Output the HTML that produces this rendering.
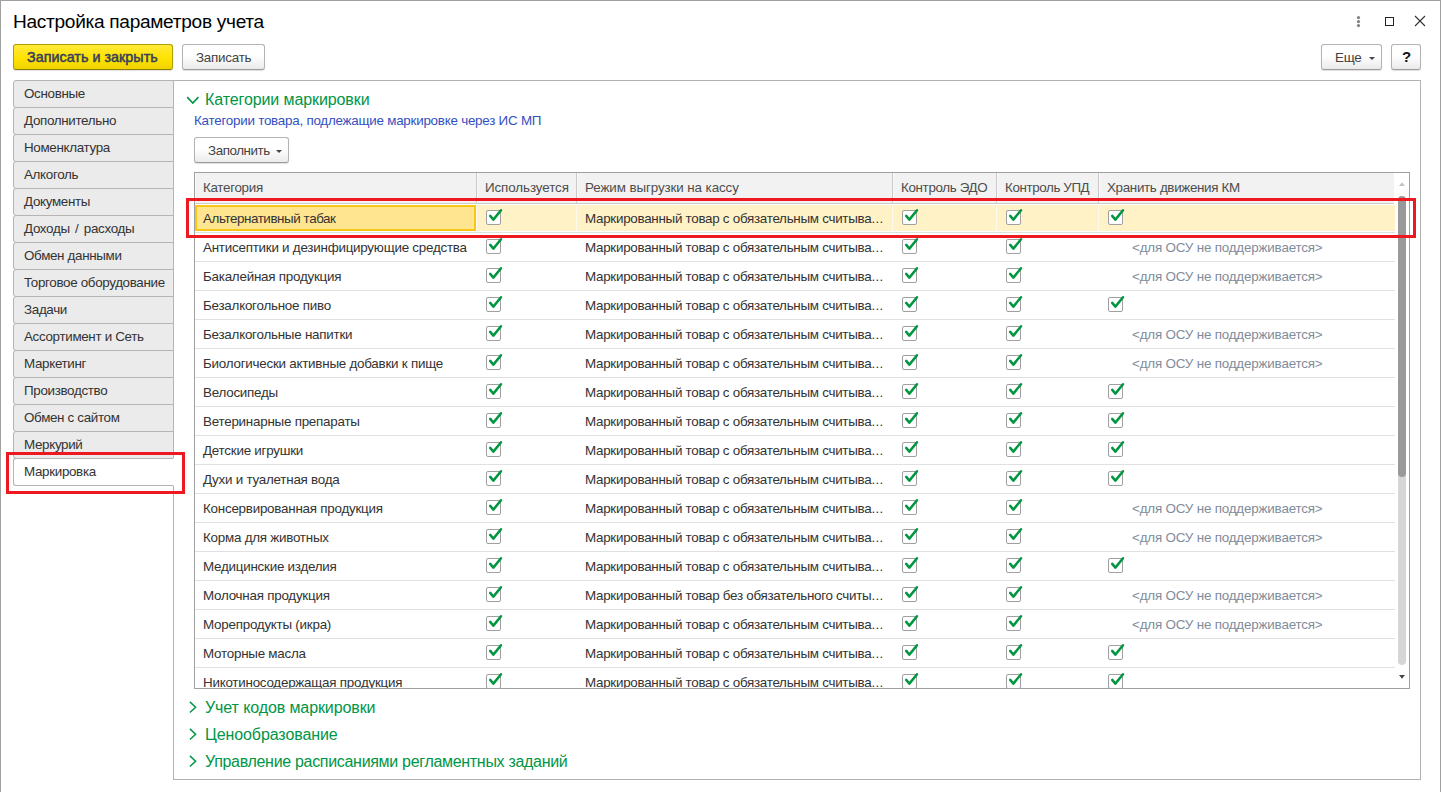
<!DOCTYPE html>
<html lang="ru">
<head>
<meta charset="utf-8">
<title>Настройка параметров учета</title>
<style>
*{box-sizing:border-box;margin:0;padding:0}
html,body{width:1441px;height:792px;overflow:hidden;background:#fff}
body{position:relative;font-family:"Liberation Sans",sans-serif;font-size:13.4px;letter-spacing:-0.24px;color:#333;line-height:16px}
.frame{position:absolute;left:0;top:0;width:1441px;height:793px;border:1px solid #a0a0a0}
.title{position:absolute;left:13px;top:10px;font-size:19.1px;letter-spacing:-0.3px;line-height:24px;color:#000;white-space:nowrap}
.btn{position:absolute;top:44px;height:26px;border:1px solid #b3b3b3;border-bottom-color:#9b9b9b;border-radius:3px;background:linear-gradient(#fff 0%,#fff 45%,#ebebeb 100%);box-shadow:0 1px 1px rgba(0,0,0,.13);color:#424242;line-height:25px;white-space:nowrap}
.btn span{position:absolute;top:0}
.btn.y{font-size:14.3px;letter-spacing:0.04px;-webkit-text-stroke:0.5px #353e5c;background:linear-gradient(#ffe93a 0%,#ffe300 55%,#f0d300 100%);border-color:#b39e00 #b39e00 #8f7e00;color:#353e5c}
.arr{position:absolute;width:0;height:0;border-left:3px solid transparent;border-right:3px solid transparent;border-top:3px solid #444}
.tab{position:absolute;left:13px;width:161px;height:28px;border:1px solid #b4b4b4;border-radius:3px 0 0 3px;background:#ebebeb;padding-left:10px;line-height:25px;letter-spacing:-0.33px;color:#333;white-space:nowrap}
.tab.sel{background:#fff;border-right-color:#fff}
.panel{position:absolute;left:173px;top:80px;width:1248px;height:700px;border:1px solid #b2b2b2}
.grp{position:absolute;left:205px;font-size:16px;letter-spacing:-0.1px;line-height:20px;color:#009646;white-space:nowrap}
.sub{position:absolute;left:194px;top:113px;color:#3350c0;white-space:nowrap}
svg{position:absolute;overflow:visible}
.tbl{position:absolute;left:194px;top:172px;width:1216px;height:517px;border:1px solid #a0a0a0;overflow:hidden}
.hdr{position:absolute;left:0;top:0;width:1199px;overflow:hidden;height:31px;background:#f2f2f2;border-bottom:1px solid #ccc}
.hc{position:absolute;top:0;height:30px;padding-left:8px;line-height:29px;letter-spacing:-0.1px;color:#4d4d4d;white-space:nowrap;border-left:1px solid #c8c8c8;box-shadow:inset 1px 0 0 #fafafa}
.row{position:absolute;left:0;width:1200px;height:29px;border-bottom:1px solid #e0e0e0}
.c{position:absolute;top:1px;height:28px;line-height:28px;white-space:nowrap;color:#333}
.cb{position:absolute;top:6px;width:15px;height:15px;border:1px solid #a0a0a0;border-radius:2px;background:#fff}
.osu{color:#7f8c9b;letter-spacing:-0.18px}
.red{position:absolute;border:3px solid #ed1820}
.sbt{position:absolute;left:1398px;width:8px;border-radius:4px}
</style>
</head>
<body>
<div class="frame"></div>
<div class="title">Настройка параметров учета</div>
<svg width="80" height="20" style="left:1350px;top:10px" viewBox="1350 10 80 20"><circle cx="1358.5" cy="17.6" r="1.55" fill="#808080"/><circle cx="1358.5" cy="21.6" r="1.55" fill="#808080"/><circle cx="1358.5" cy="25.6" r="1.55" fill="#808080"/><rect x="1385.5" y="17.5" width="8" height="8" fill="none" stroke="#222" stroke-width="1"/><path d="M1415 16 L1425 26 M1425 16 L1415 26" stroke="#333" stroke-width="1.1" fill="none"/></svg>
<div class="btn y" style="left:13px;width:160px"><span style="left:13px">Записать и закрыть</span></div>
<div class="btn" style="left:182px;width:83px"><span style="left:13px">Записать</span></div>
<div class="btn" style="left:1321px;width:61px"><span style="left:13px">Еще</span><i class="arr" style="left:47px;top:12px"></i></div>
<div class="btn" style="left:1391px;width:30px"><span style="left:10px;top:-1px;font-size:15px;font-weight:bold;color:#111">?</span></div>
<div class="panel"></div>
<div class="tab" style="top:80px">Основные</div>
<div class="tab" style="top:107px">Дополнительно</div>
<div class="tab" style="top:134px">Номенклатура</div>
<div class="tab" style="top:161px">Алкоголь</div>
<div class="tab" style="top:188px">Документы</div>
<div class="tab" style="top:215px;word-spacing:2px">Доходы / расходы</div>
<div class="tab" style="top:242px">Обмен данными</div>
<div class="tab" style="top:269px">Торговое оборудование</div>
<div class="tab" style="top:296px">Задачи</div>
<div class="tab" style="top:323px">Ассортимент и Сеть</div>
<div class="tab" style="top:350px">Маркетинг</div>
<div class="tab" style="top:377px">Производство</div>
<div class="tab" style="top:404px">Обмен с сайтом</div>
<div class="tab" style="top:431px">Меркурий</div>
<div class="tab sel" style="top:458px">Маркировка</div>
<svg width="12" height="8" style="left:187px;top:97px" viewBox="0 0 12 8"><path d="M0.2 0.1 L5.8 6.1 L11.4 0.1" fill="none" stroke="#009646" stroke-width="1.6"/></svg>
<div class="grp" style="top:90px;letter-spacing:-0.1px">Категории маркировки</div>
<div class="sub">Категории товара, подлежащие маркировке через ИС МП</div>
<div class="btn" style="left:194px;top:137px;width:95px"><span style="left:13px;letter-spacing:-0.45px">Заполнить</span><i class="arr" style="left:81px;top:12px"></i></div>
<div class="tbl">
<div class="hdr"><div class="hc" style="left:0px;width:282px;letter-spacing:-0.3px;border-left:none;padding-left:8px">Категория</div><div class="hc" style="left:281px;width:100px;letter-spacing:-0.1px">Используется</div><div class="hc" style="left:381px;width:316px;letter-spacing:-0.1px">Режим выгрузки на кассу</div><div class="hc" style="left:697px;width:104px;letter-spacing:-0.35px">Контроль ЭДО</div><div class="hc" style="left:801px;width:102px;letter-spacing:-0.4px">Контроль УПД</div><div class="hc" style="left:903px;width:296px;letter-spacing:-0.33px">Хранить движения КМ</div></div>
<div class="row" style="top:31px"><div style="position:absolute;left:0;top:1px;width:1200px;height:26px;background:#fff2c7"></div><div style="position:absolute;left:0;top:1px;width:281px;height:26px;background:#ffe58f;border:2px solid #f8c716"></div><div style="position:absolute;left:281px;top:1px;width:1px;height:26px;background:#fffaf0"></div><div style="position:absolute;left:381px;top:1px;width:1px;height:26px;background:#fffaf0"></div><div style="position:absolute;left:697px;top:1px;width:1px;height:26px;background:#fffaf0"></div><div style="position:absolute;left:801px;top:1px;width:1px;height:26px;background:#fffaf0"></div><div style="position:absolute;left:903px;top:1px;width:1px;height:26px;background:#fffaf0"></div><div class="c" style="left:8px;letter-spacing:-0.43px">Альтернативный табак</div><div class="cb" style="left:291px"><svg width="17" height="17" style="left:-1px;top:-2px" viewBox="0 0 17 17"><path d="M4.2 6.9 L7.4 10.6 L15 1.2" fill="none" stroke="#009640" stroke-width="2.5" stroke-linecap="round" stroke-linejoin="round"/></svg></div><div class="c" style="left:390px;letter-spacing:-0.28px">Маркированный товар с обязательным считыва<span style="letter-spacing:0.3px">...</span></div><div class="cb" style="left:707px"><svg width="17" height="17" style="left:-1px;top:-2px" viewBox="0 0 17 17"><path d="M4.2 6.9 L7.4 10.6 L15 1.2" fill="none" stroke="#009640" stroke-width="2.5" stroke-linecap="round" stroke-linejoin="round"/></svg></div><div class="cb" style="left:811px"><svg width="17" height="17" style="left:-1px;top:-2px" viewBox="0 0 17 17"><path d="M4.2 6.9 L7.4 10.6 L15 1.2" fill="none" stroke="#009640" stroke-width="2.5" stroke-linecap="round" stroke-linejoin="round"/></svg></div><div class="cb" style="left:913px"><svg width="17" height="17" style="left:-1px;top:-2px" viewBox="0 0 17 17"><path d="M4.2 6.9 L7.4 10.6 L15 1.2" fill="none" stroke="#009640" stroke-width="2.5" stroke-linecap="round" stroke-linejoin="round"/></svg></div></div>
<div class="row" style="top:60px"><div class="c" style="left:8px">Антисептики и дезинфицирующие средства</div><div class="cb" style="left:291px"><svg width="17" height="17" style="left:-1px;top:-2px" viewBox="0 0 17 17"><path d="M4.2 6.9 L7.4 10.6 L15 1.2" fill="none" stroke="#009640" stroke-width="2.5" stroke-linecap="round" stroke-linejoin="round"/></svg></div><div class="c" style="left:390px;letter-spacing:-0.28px">Маркированный товар с обязательным считыва<span style="letter-spacing:0.3px">...</span></div><div class="cb" style="left:707px"><svg width="17" height="17" style="left:-1px;top:-2px" viewBox="0 0 17 17"><path d="M4.2 6.9 L7.4 10.6 L15 1.2" fill="none" stroke="#009640" stroke-width="2.5" stroke-linecap="round" stroke-linejoin="round"/></svg></div><div class="cb" style="left:811px"><svg width="17" height="17" style="left:-1px;top:-2px" viewBox="0 0 17 17"><path d="M4.2 6.9 L7.4 10.6 L15 1.2" fill="none" stroke="#009640" stroke-width="2.5" stroke-linecap="round" stroke-linejoin="round"/></svg></div><div class="c osu" style="left:937px">&lt;для ОСУ не поддерживается&gt;</div></div>
<div class="row" style="top:89px"><div class="c" style="left:8px">Бакалейная продукция</div><div class="cb" style="left:291px"><svg width="17" height="17" style="left:-1px;top:-2px" viewBox="0 0 17 17"><path d="M4.2 6.9 L7.4 10.6 L15 1.2" fill="none" stroke="#009640" stroke-width="2.5" stroke-linecap="round" stroke-linejoin="round"/></svg></div><div class="c" style="left:390px;letter-spacing:-0.28px">Маркированный товар с обязательным считыва<span style="letter-spacing:0.3px">...</span></div><div class="cb" style="left:707px"><svg width="17" height="17" style="left:-1px;top:-2px" viewBox="0 0 17 17"><path d="M4.2 6.9 L7.4 10.6 L15 1.2" fill="none" stroke="#009640" stroke-width="2.5" stroke-linecap="round" stroke-linejoin="round"/></svg></div><div class="cb" style="left:811px"><svg width="17" height="17" style="left:-1px;top:-2px" viewBox="0 0 17 17"><path d="M4.2 6.9 L7.4 10.6 L15 1.2" fill="none" stroke="#009640" stroke-width="2.5" stroke-linecap="round" stroke-linejoin="round"/></svg></div><div class="c osu" style="left:937px">&lt;для ОСУ не поддерживается&gt;</div></div>
<div class="row" style="top:118px"><div class="c" style="left:8px">Безалкогольное пиво</div><div class="cb" style="left:291px"><svg width="17" height="17" style="left:-1px;top:-2px" viewBox="0 0 17 17"><path d="M4.2 6.9 L7.4 10.6 L15 1.2" fill="none" stroke="#009640" stroke-width="2.5" stroke-linecap="round" stroke-linejoin="round"/></svg></div><div class="c" style="left:390px;letter-spacing:-0.28px">Маркированный товар с обязательным считыва<span style="letter-spacing:0.3px">...</span></div><div class="cb" style="left:707px"><svg width="17" height="17" style="left:-1px;top:-2px" viewBox="0 0 17 17"><path d="M4.2 6.9 L7.4 10.6 L15 1.2" fill="none" stroke="#009640" stroke-width="2.5" stroke-linecap="round" stroke-linejoin="round"/></svg></div><div class="cb" style="left:811px"><svg width="17" height="17" style="left:-1px;top:-2px" viewBox="0 0 17 17"><path d="M4.2 6.9 L7.4 10.6 L15 1.2" fill="none" stroke="#009640" stroke-width="2.5" stroke-linecap="round" stroke-linejoin="round"/></svg></div><div class="cb" style="left:913px"><svg width="17" height="17" style="left:-1px;top:-2px" viewBox="0 0 17 17"><path d="M4.2 6.9 L7.4 10.6 L15 1.2" fill="none" stroke="#009640" stroke-width="2.5" stroke-linecap="round" stroke-linejoin="round"/></svg></div></div>
<div class="row" style="top:147px"><div class="c" style="left:8px">Безалкогольные напитки</div><div class="cb" style="left:291px"><svg width="17" height="17" style="left:-1px;top:-2px" viewBox="0 0 17 17"><path d="M4.2 6.9 L7.4 10.6 L15 1.2" fill="none" stroke="#009640" stroke-width="2.5" stroke-linecap="round" stroke-linejoin="round"/></svg></div><div class="c" style="left:390px;letter-spacing:-0.28px">Маркированный товар с обязательным считыва<span style="letter-spacing:0.3px">...</span></div><div class="cb" style="left:707px"><svg width="17" height="17" style="left:-1px;top:-2px" viewBox="0 0 17 17"><path d="M4.2 6.9 L7.4 10.6 L15 1.2" fill="none" stroke="#009640" stroke-width="2.5" stroke-linecap="round" stroke-linejoin="round"/></svg></div><div class="cb" style="left:811px"><svg width="17" height="17" style="left:-1px;top:-2px" viewBox="0 0 17 17"><path d="M4.2 6.9 L7.4 10.6 L15 1.2" fill="none" stroke="#009640" stroke-width="2.5" stroke-linecap="round" stroke-linejoin="round"/></svg></div><div class="c osu" style="left:937px">&lt;для ОСУ не поддерживается&gt;</div></div>
<div class="row" style="top:176px"><div class="c" style="left:8px">Биологически активные добавки к пище</div><div class="cb" style="left:291px"><svg width="17" height="17" style="left:-1px;top:-2px" viewBox="0 0 17 17"><path d="M4.2 6.9 L7.4 10.6 L15 1.2" fill="none" stroke="#009640" stroke-width="2.5" stroke-linecap="round" stroke-linejoin="round"/></svg></div><div class="c" style="left:390px;letter-spacing:-0.28px">Маркированный товар с обязательным считыва<span style="letter-spacing:0.3px">...</span></div><div class="cb" style="left:707px"><svg width="17" height="17" style="left:-1px;top:-2px" viewBox="0 0 17 17"><path d="M4.2 6.9 L7.4 10.6 L15 1.2" fill="none" stroke="#009640" stroke-width="2.5" stroke-linecap="round" stroke-linejoin="round"/></svg></div><div class="cb" style="left:811px"><svg width="17" height="17" style="left:-1px;top:-2px" viewBox="0 0 17 17"><path d="M4.2 6.9 L7.4 10.6 L15 1.2" fill="none" stroke="#009640" stroke-width="2.5" stroke-linecap="round" stroke-linejoin="round"/></svg></div><div class="c osu" style="left:937px">&lt;для ОСУ не поддерживается&gt;</div></div>
<div class="row" style="top:205px"><div class="c" style="left:8px">Велосипеды</div><div class="cb" style="left:291px"><svg width="17" height="17" style="left:-1px;top:-2px" viewBox="0 0 17 17"><path d="M4.2 6.9 L7.4 10.6 L15 1.2" fill="none" stroke="#009640" stroke-width="2.5" stroke-linecap="round" stroke-linejoin="round"/></svg></div><div class="c" style="left:390px;letter-spacing:-0.28px">Маркированный товар с обязательным считыва<span style="letter-spacing:0.3px">...</span></div><div class="cb" style="left:707px"><svg width="17" height="17" style="left:-1px;top:-2px" viewBox="0 0 17 17"><path d="M4.2 6.9 L7.4 10.6 L15 1.2" fill="none" stroke="#009640" stroke-width="2.5" stroke-linecap="round" stroke-linejoin="round"/></svg></div><div class="cb" style="left:811px"><svg width="17" height="17" style="left:-1px;top:-2px" viewBox="0 0 17 17"><path d="M4.2 6.9 L7.4 10.6 L15 1.2" fill="none" stroke="#009640" stroke-width="2.5" stroke-linecap="round" stroke-linejoin="round"/></svg></div><div class="cb" style="left:913px"><svg width="17" height="17" style="left:-1px;top:-2px" viewBox="0 0 17 17"><path d="M4.2 6.9 L7.4 10.6 L15 1.2" fill="none" stroke="#009640" stroke-width="2.5" stroke-linecap="round" stroke-linejoin="round"/></svg></div></div>
<div class="row" style="top:234px"><div class="c" style="left:8px">Ветеринарные препараты</div><div class="cb" style="left:291px"><svg width="17" height="17" style="left:-1px;top:-2px" viewBox="0 0 17 17"><path d="M4.2 6.9 L7.4 10.6 L15 1.2" fill="none" stroke="#009640" stroke-width="2.5" stroke-linecap="round" stroke-linejoin="round"/></svg></div><div class="c" style="left:390px;letter-spacing:-0.28px">Маркированный товар с обязательным считыва<span style="letter-spacing:0.3px">...</span></div><div class="cb" style="left:707px"><svg width="17" height="17" style="left:-1px;top:-2px" viewBox="0 0 17 17"><path d="M4.2 6.9 L7.4 10.6 L15 1.2" fill="none" stroke="#009640" stroke-width="2.5" stroke-linecap="round" stroke-linejoin="round"/></svg></div><div class="cb" style="left:811px"><svg width="17" height="17" style="left:-1px;top:-2px" viewBox="0 0 17 17"><path d="M4.2 6.9 L7.4 10.6 L15 1.2" fill="none" stroke="#009640" stroke-width="2.5" stroke-linecap="round" stroke-linejoin="round"/></svg></div><div class="cb" style="left:913px"><svg width="17" height="17" style="left:-1px;top:-2px" viewBox="0 0 17 17"><path d="M4.2 6.9 L7.4 10.6 L15 1.2" fill="none" stroke="#009640" stroke-width="2.5" stroke-linecap="round" stroke-linejoin="round"/></svg></div></div>
<div class="row" style="top:263px"><div class="c" style="left:8px">Детские игрушки</div><div class="cb" style="left:291px"><svg width="17" height="17" style="left:-1px;top:-2px" viewBox="0 0 17 17"><path d="M4.2 6.9 L7.4 10.6 L15 1.2" fill="none" stroke="#009640" stroke-width="2.5" stroke-linecap="round" stroke-linejoin="round"/></svg></div><div class="c" style="left:390px;letter-spacing:-0.28px">Маркированный товар с обязательным считыва<span style="letter-spacing:0.3px">...</span></div><div class="cb" style="left:707px"><svg width="17" height="17" style="left:-1px;top:-2px" viewBox="0 0 17 17"><path d="M4.2 6.9 L7.4 10.6 L15 1.2" fill="none" stroke="#009640" stroke-width="2.5" stroke-linecap="round" stroke-linejoin="round"/></svg></div><div class="cb" style="left:811px"><svg width="17" height="17" style="left:-1px;top:-2px" viewBox="0 0 17 17"><path d="M4.2 6.9 L7.4 10.6 L15 1.2" fill="none" stroke="#009640" stroke-width="2.5" stroke-linecap="round" stroke-linejoin="round"/></svg></div><div class="cb" style="left:913px"><svg width="17" height="17" style="left:-1px;top:-2px" viewBox="0 0 17 17"><path d="M4.2 6.9 L7.4 10.6 L15 1.2" fill="none" stroke="#009640" stroke-width="2.5" stroke-linecap="round" stroke-linejoin="round"/></svg></div></div>
<div class="row" style="top:292px"><div class="c" style="left:8px">Духи и туалетная вода</div><div class="cb" style="left:291px"><svg width="17" height="17" style="left:-1px;top:-2px" viewBox="0 0 17 17"><path d="M4.2 6.9 L7.4 10.6 L15 1.2" fill="none" stroke="#009640" stroke-width="2.5" stroke-linecap="round" stroke-linejoin="round"/></svg></div><div class="c" style="left:390px;letter-spacing:-0.28px">Маркированный товар с обязательным считыва<span style="letter-spacing:0.3px">...</span></div><div class="cb" style="left:707px"><svg width="17" height="17" style="left:-1px;top:-2px" viewBox="0 0 17 17"><path d="M4.2 6.9 L7.4 10.6 L15 1.2" fill="none" stroke="#009640" stroke-width="2.5" stroke-linecap="round" stroke-linejoin="round"/></svg></div><div class="cb" style="left:811px"><svg width="17" height="17" style="left:-1px;top:-2px" viewBox="0 0 17 17"><path d="M4.2 6.9 L7.4 10.6 L15 1.2" fill="none" stroke="#009640" stroke-width="2.5" stroke-linecap="round" stroke-linejoin="round"/></svg></div><div class="cb" style="left:913px"><svg width="17" height="17" style="left:-1px;top:-2px" viewBox="0 0 17 17"><path d="M4.2 6.9 L7.4 10.6 L15 1.2" fill="none" stroke="#009640" stroke-width="2.5" stroke-linecap="round" stroke-linejoin="round"/></svg></div></div>
<div class="row" style="top:321px"><div class="c" style="left:8px">Консервированная продукция</div><div class="cb" style="left:291px"><svg width="17" height="17" style="left:-1px;top:-2px" viewBox="0 0 17 17"><path d="M4.2 6.9 L7.4 10.6 L15 1.2" fill="none" stroke="#009640" stroke-width="2.5" stroke-linecap="round" stroke-linejoin="round"/></svg></div><div class="c" style="left:390px;letter-spacing:-0.28px">Маркированный товар с обязательным считыва<span style="letter-spacing:0.3px">...</span></div><div class="cb" style="left:707px"><svg width="17" height="17" style="left:-1px;top:-2px" viewBox="0 0 17 17"><path d="M4.2 6.9 L7.4 10.6 L15 1.2" fill="none" stroke="#009640" stroke-width="2.5" stroke-linecap="round" stroke-linejoin="round"/></svg></div><div class="cb" style="left:811px"><svg width="17" height="17" style="left:-1px;top:-2px" viewBox="0 0 17 17"><path d="M4.2 6.9 L7.4 10.6 L15 1.2" fill="none" stroke="#009640" stroke-width="2.5" stroke-linecap="round" stroke-linejoin="round"/></svg></div><div class="c osu" style="left:937px">&lt;для ОСУ не поддерживается&gt;</div></div>
<div class="row" style="top:350px"><div class="c" style="left:8px">Корма для животных</div><div class="cb" style="left:291px"><svg width="17" height="17" style="left:-1px;top:-2px" viewBox="0 0 17 17"><path d="M4.2 6.9 L7.4 10.6 L15 1.2" fill="none" stroke="#009640" stroke-width="2.5" stroke-linecap="round" stroke-linejoin="round"/></svg></div><div class="c" style="left:390px;letter-spacing:-0.28px">Маркированный товар с обязательным считыва<span style="letter-spacing:0.3px">...</span></div><div class="cb" style="left:707px"><svg width="17" height="17" style="left:-1px;top:-2px" viewBox="0 0 17 17"><path d="M4.2 6.9 L7.4 10.6 L15 1.2" fill="none" stroke="#009640" stroke-width="2.5" stroke-linecap="round" stroke-linejoin="round"/></svg></div><div class="cb" style="left:811px"><svg width="17" height="17" style="left:-1px;top:-2px" viewBox="0 0 17 17"><path d="M4.2 6.9 L7.4 10.6 L15 1.2" fill="none" stroke="#009640" stroke-width="2.5" stroke-linecap="round" stroke-linejoin="round"/></svg></div><div class="c osu" style="left:937px">&lt;для ОСУ не поддерживается&gt;</div></div>
<div class="row" style="top:379px"><div class="c" style="left:8px">Медицинские изделия</div><div class="cb" style="left:291px"><svg width="17" height="17" style="left:-1px;top:-2px" viewBox="0 0 17 17"><path d="M4.2 6.9 L7.4 10.6 L15 1.2" fill="none" stroke="#009640" stroke-width="2.5" stroke-linecap="round" stroke-linejoin="round"/></svg></div><div class="c" style="left:390px;letter-spacing:-0.28px">Маркированный товар с обязательным считыва<span style="letter-spacing:0.3px">...</span></div><div class="cb" style="left:707px"><svg width="17" height="17" style="left:-1px;top:-2px" viewBox="0 0 17 17"><path d="M4.2 6.9 L7.4 10.6 L15 1.2" fill="none" stroke="#009640" stroke-width="2.5" stroke-linecap="round" stroke-linejoin="round"/></svg></div><div class="cb" style="left:811px"><svg width="17" height="17" style="left:-1px;top:-2px" viewBox="0 0 17 17"><path d="M4.2 6.9 L7.4 10.6 L15 1.2" fill="none" stroke="#009640" stroke-width="2.5" stroke-linecap="round" stroke-linejoin="round"/></svg></div><div class="cb" style="left:913px"><svg width="17" height="17" style="left:-1px;top:-2px" viewBox="0 0 17 17"><path d="M4.2 6.9 L7.4 10.6 L15 1.2" fill="none" stroke="#009640" stroke-width="2.5" stroke-linecap="round" stroke-linejoin="round"/></svg></div></div>
<div class="row" style="top:408px"><div class="c" style="left:8px">Молочная продукция</div><div class="cb" style="left:291px"><svg width="17" height="17" style="left:-1px;top:-2px" viewBox="0 0 17 17"><path d="M4.2 6.9 L7.4 10.6 L15 1.2" fill="none" stroke="#009640" stroke-width="2.5" stroke-linecap="round" stroke-linejoin="round"/></svg></div><div class="c" style="left:390px;letter-spacing:-0.28px">Маркированный товар без обязательного считы<span style="letter-spacing:0.3px">...</span></div><div class="cb" style="left:707px"><svg width="17" height="17" style="left:-1px;top:-2px" viewBox="0 0 17 17"><path d="M4.2 6.9 L7.4 10.6 L15 1.2" fill="none" stroke="#009640" stroke-width="2.5" stroke-linecap="round" stroke-linejoin="round"/></svg></div><div class="cb" style="left:811px"><svg width="17" height="17" style="left:-1px;top:-2px" viewBox="0 0 17 17"><path d="M4.2 6.9 L7.4 10.6 L15 1.2" fill="none" stroke="#009640" stroke-width="2.5" stroke-linecap="round" stroke-linejoin="round"/></svg></div><div class="c osu" style="left:937px">&lt;для ОСУ не поддерживается&gt;</div></div>
<div class="row" style="top:437px"><div class="c" style="left:8px">Морепродукты (икра)</div><div class="cb" style="left:291px"><svg width="17" height="17" style="left:-1px;top:-2px" viewBox="0 0 17 17"><path d="M4.2 6.9 L7.4 10.6 L15 1.2" fill="none" stroke="#009640" stroke-width="2.5" stroke-linecap="round" stroke-linejoin="round"/></svg></div><div class="c" style="left:390px;letter-spacing:-0.28px">Маркированный товар с обязательным считыва<span style="letter-spacing:0.3px">...</span></div><div class="cb" style="left:707px"><svg width="17" height="17" style="left:-1px;top:-2px" viewBox="0 0 17 17"><path d="M4.2 6.9 L7.4 10.6 L15 1.2" fill="none" stroke="#009640" stroke-width="2.5" stroke-linecap="round" stroke-linejoin="round"/></svg></div><div class="cb" style="left:811px"><svg width="17" height="17" style="left:-1px;top:-2px" viewBox="0 0 17 17"><path d="M4.2 6.9 L7.4 10.6 L15 1.2" fill="none" stroke="#009640" stroke-width="2.5" stroke-linecap="round" stroke-linejoin="round"/></svg></div><div class="c osu" style="left:937px">&lt;для ОСУ не поддерживается&gt;</div></div>
<div class="row" style="top:466px"><div class="c" style="left:8px">Моторные масла</div><div class="cb" style="left:291px"><svg width="17" height="17" style="left:-1px;top:-2px" viewBox="0 0 17 17"><path d="M4.2 6.9 L7.4 10.6 L15 1.2" fill="none" stroke="#009640" stroke-width="2.5" stroke-linecap="round" stroke-linejoin="round"/></svg></div><div class="c" style="left:390px;letter-spacing:-0.28px">Маркированный товар с обязательным считыва<span style="letter-spacing:0.3px">...</span></div><div class="cb" style="left:707px"><svg width="17" height="17" style="left:-1px;top:-2px" viewBox="0 0 17 17"><path d="M4.2 6.9 L7.4 10.6 L15 1.2" fill="none" stroke="#009640" stroke-width="2.5" stroke-linecap="round" stroke-linejoin="round"/></svg></div><div class="cb" style="left:811px"><svg width="17" height="17" style="left:-1px;top:-2px" viewBox="0 0 17 17"><path d="M4.2 6.9 L7.4 10.6 L15 1.2" fill="none" stroke="#009640" stroke-width="2.5" stroke-linecap="round" stroke-linejoin="round"/></svg></div><div class="cb" style="left:913px"><svg width="17" height="17" style="left:-1px;top:-2px" viewBox="0 0 17 17"><path d="M4.2 6.9 L7.4 10.6 L15 1.2" fill="none" stroke="#009640" stroke-width="2.5" stroke-linecap="round" stroke-linejoin="round"/></svg></div></div>
<div class="row" style="top:495px"><div class="c" style="left:8px">Никотиносодержащая продукция</div><div class="cb" style="left:291px"><svg width="17" height="17" style="left:-1px;top:-2px" viewBox="0 0 17 17"><path d="M4.2 6.9 L7.4 10.6 L15 1.2" fill="none" stroke="#009640" stroke-width="2.5" stroke-linecap="round" stroke-linejoin="round"/></svg></div><div class="c" style="left:390px;letter-spacing:-0.28px">Маркированный товар с обязательным считыва<span style="letter-spacing:0.3px">...</span></div><div class="cb" style="left:707px"><svg width="17" height="17" style="left:-1px;top:-2px" viewBox="0 0 17 17"><path d="M4.2 6.9 L7.4 10.6 L15 1.2" fill="none" stroke="#009640" stroke-width="2.5" stroke-linecap="round" stroke-linejoin="round"/></svg></div><div class="cb" style="left:811px"><svg width="17" height="17" style="left:-1px;top:-2px" viewBox="0 0 17 17"><path d="M4.2 6.9 L7.4 10.6 L15 1.2" fill="none" stroke="#009640" stroke-width="2.5" stroke-linecap="round" stroke-linejoin="round"/></svg></div><div class="cb" style="left:913px"><svg width="17" height="17" style="left:-1px;top:-2px" viewBox="0 0 17 17"><path d="M4.2 6.9 L7.4 10.6 L15 1.2" fill="none" stroke="#009640" stroke-width="2.5" stroke-linecap="round" stroke-linejoin="round"/></svg></div></div>
</div>
<svg width="6" height="4" style="left:1399px;top:182px" viewBox="0 0 6 4"><path d="M0 4 L3 0.3 L6 4 Z" fill="#c2c2c2"/></svg>
<div class="sbt" style="top:196px;height:469px;background:#d6d6d6"></div>
<div class="sbt" style="top:196px;height:281px;background:#999"></div>
<svg width="6" height="4" style="left:1399px;top:675px" viewBox="0 0 6 4"><path d="M0 0 L3 3.7 L6 0 Z" fill="#444"/></svg>
<svg width="8" height="12" style="left:189px;top:701px" viewBox="0 0 8 12"><path d="M0.9 0.9 L6.6 6.2 L0.9 11.5" fill="none" stroke="#009646" stroke-width="1.5"/></svg><div class="grp" style="top:698px">Учет кодов маркировки</div>
<svg width="8" height="12" style="left:189px;top:728px" viewBox="0 0 8 12"><path d="M0.9 0.9 L6.6 6.2 L0.9 11.5" fill="none" stroke="#009646" stroke-width="1.5"/></svg><div class="grp" style="top:725px">Ценообразование</div>
<svg width="8" height="12" style="left:189px;top:755px" viewBox="0 0 8 12"><path d="M0.9 0.9 L6.6 6.2 L0.9 11.5" fill="none" stroke="#009646" stroke-width="1.5"/></svg><div class="grp" style="top:752px;letter-spacing:-0.31px">Управление расписаниями регламентных заданий</div>
<div class="red" style="left:6px;top:452px;width:179px;height:42px"></div>
<div class="red" style="left:186px;top:198px;width:1230px;height:40px"></div>
</body>
</html>
